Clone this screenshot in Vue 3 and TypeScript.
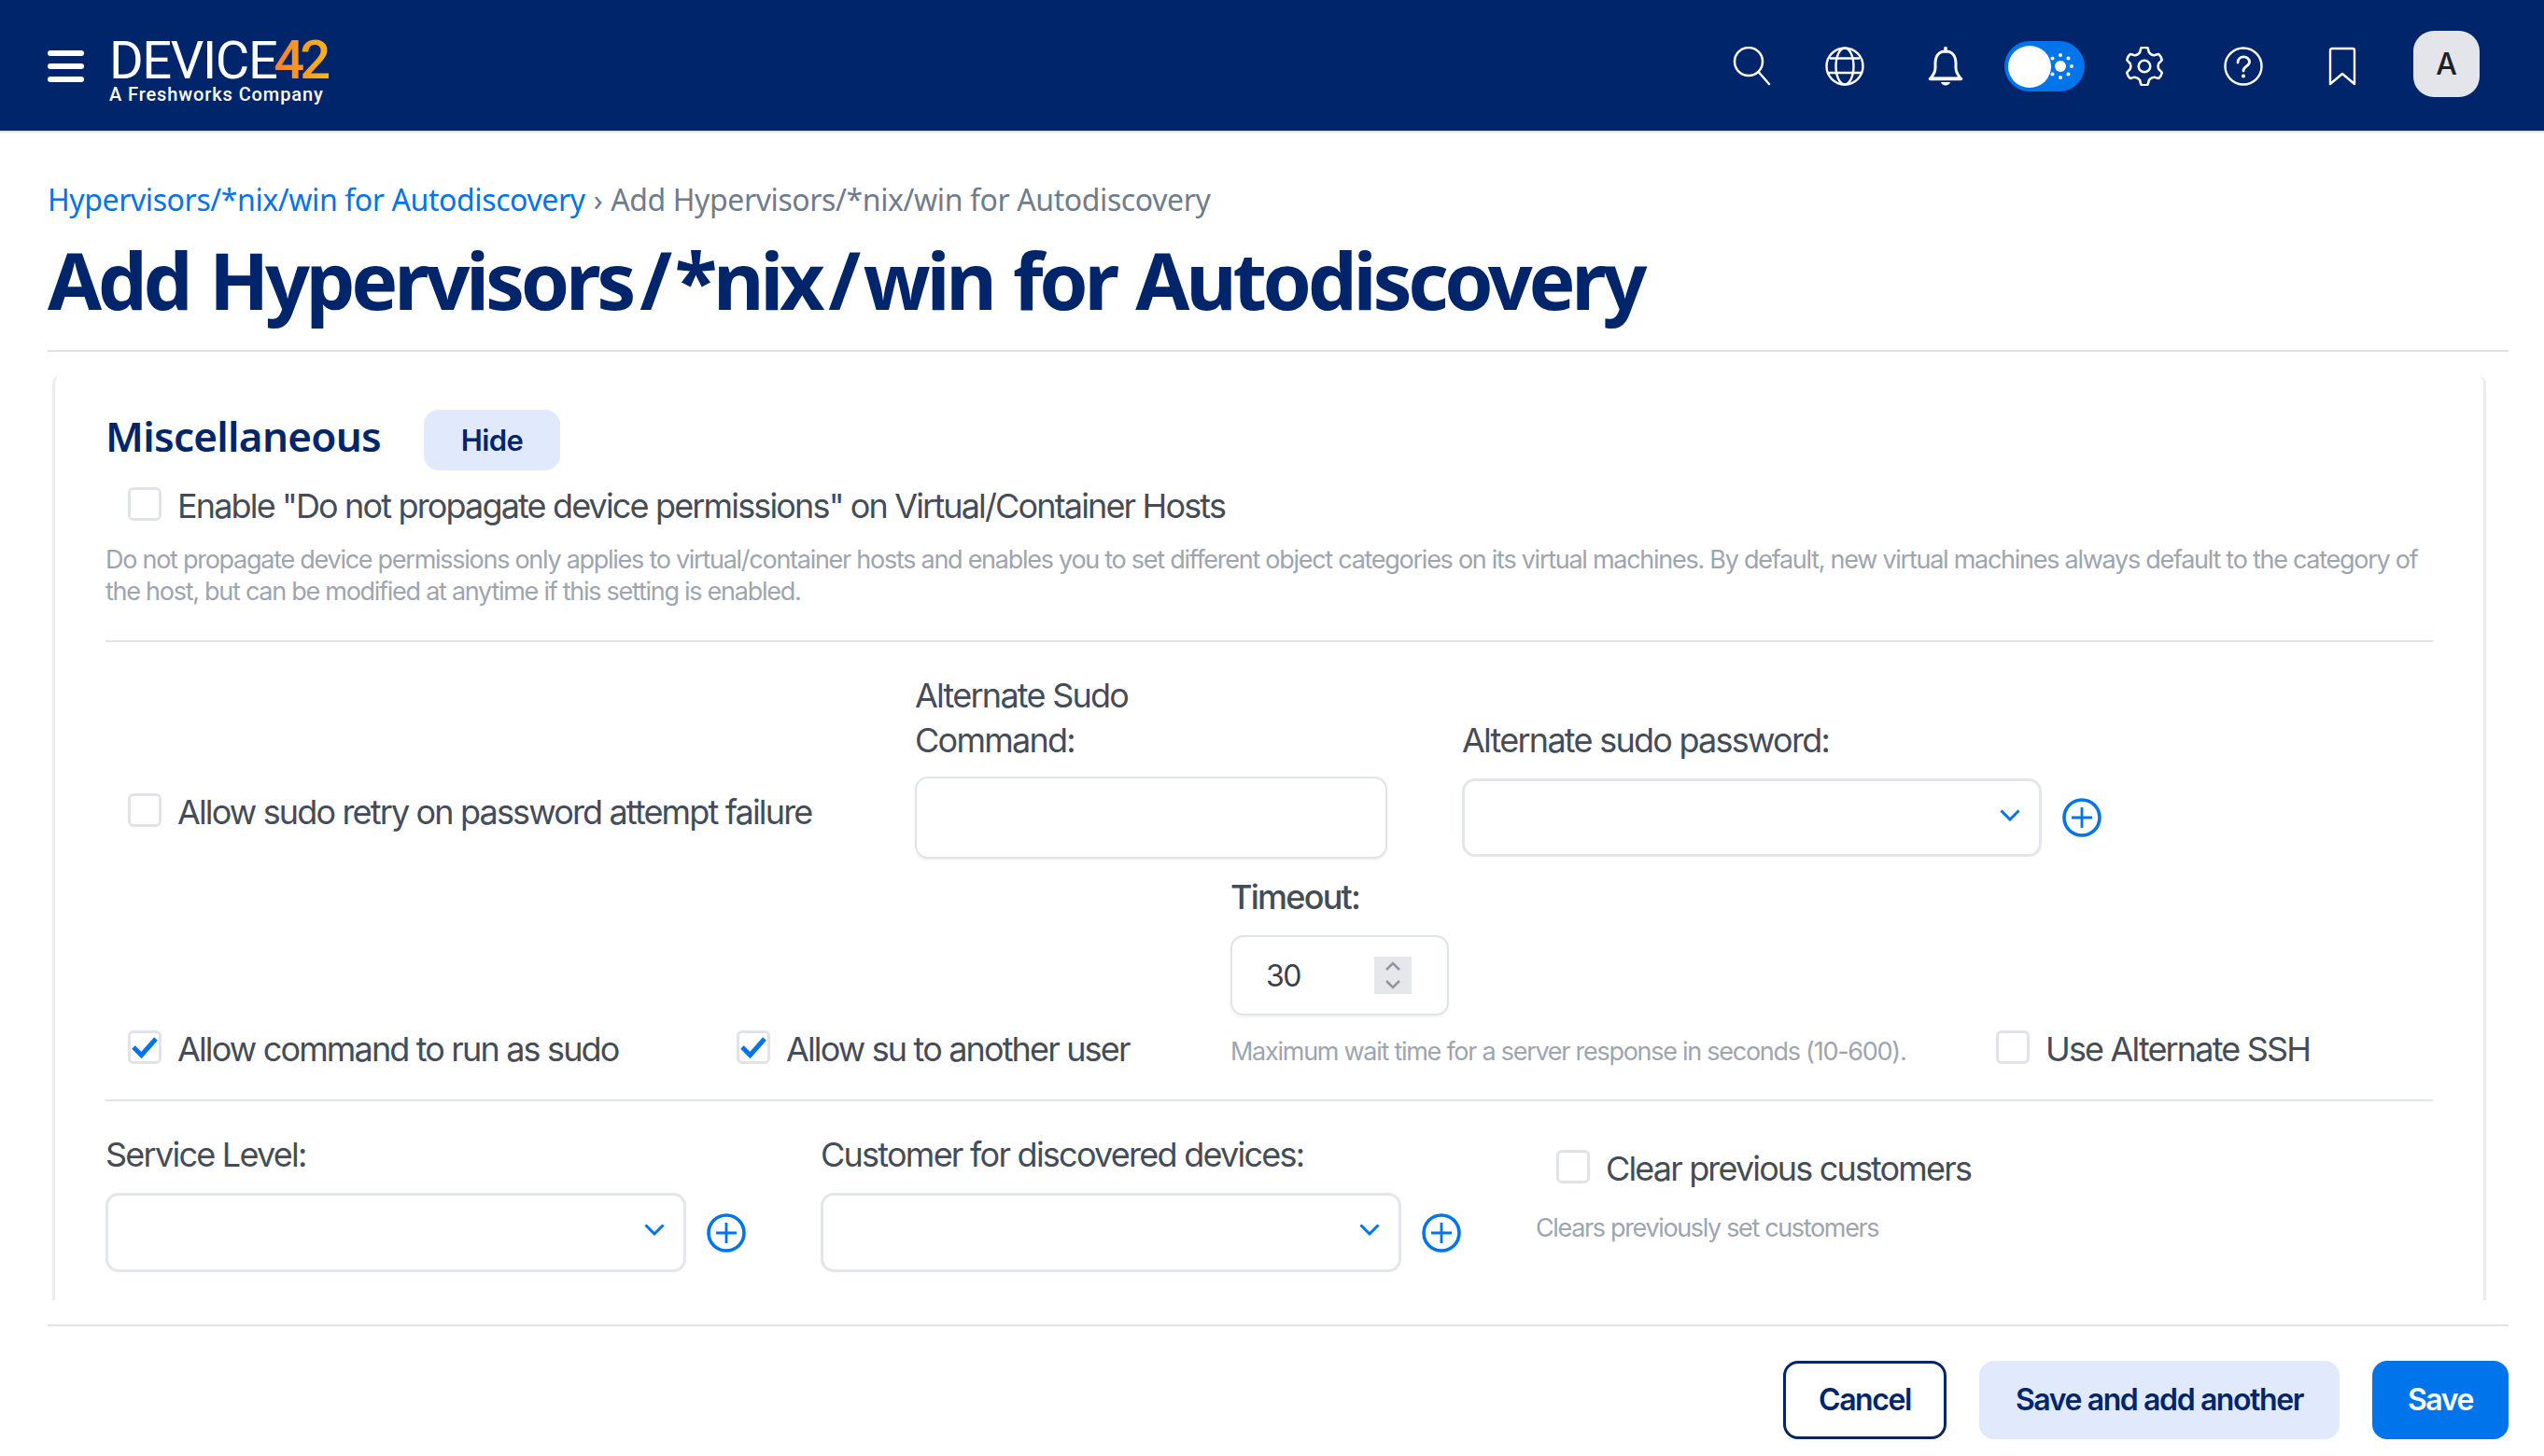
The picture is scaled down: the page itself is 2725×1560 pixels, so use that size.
<script setup lang="ts">
const teeth = 6
const step = (2 * Math.PI) / teeth
const gearPt = (r: number, ang: number) =>
  `${(20 + r * Math.cos(ang)).toFixed(1)} ${(20 + r * Math.sin(ang)).toFixed(1)}`
let gearPath = ''
for (let i = 0; i < teeth; i++) {
  const a = -Math.PI / 2 + i * step
  gearPath += `${i === 0 ? 'M' : 'L'}${gearPt(15, a - step * 0.3)} `
  gearPath += `Q${gearPt(17, a - step * 0.24)} ${gearPt(19, a - step * 0.17)} `
  gearPath += `Q${gearPt(20, a)} ${gearPt(19, a + step * 0.17)} `
  gearPath += `Q${gearPt(17, a + step * 0.24)} ${gearPt(15, a + step * 0.3)} `
  gearPath += `Q${gearPt(13.2, a + step * 0.5)} ${gearPt(15, a + step * 0.7)} `
}
gearPath += 'Z'
const sunDots = Array.from({ length: 8 }, (_, i) => ({
  x: 14 + 12 * Math.cos((i * Math.PI) / 4),
  y: 14 + 12 * Math.sin((i * Math.PI) / 4),
}))
</script>

<template>
  <div class="page">
    <header class="topbar">
      <svg class="burger" viewBox="0 0 39 34" width="39" height="34">
        <rect y="0" width="39" height="6" rx="3" fill="#fff" />
        <rect y="14" width="39" height="6" rx="3" fill="#fff" />
        <rect y="28" width="39" height="6" rx="3" fill="#fff" />
      </svg>
      <div class="logo">
        <div class="logo-mark">DEVICE<span class="logo-num">42</span></div>
        <div class="logo-sub">A Freshworks Company</div>
      </div>
      <nav class="tools">
        <span class="tool tool-search">
          <svg width="42" height="42" viewBox="0 0 42 42" fill="none" stroke="#fff" stroke-width="2.5">
            <circle cx="17" cy="16" r="15" />
            <path d="M28 27.500 L39 40" stroke-linecap="round" />
          </svg>
        </span>
        <span class="tool tool-globe">
          <svg width="42" height="42" viewBox="0 0 42 42" fill="none" stroke="#fff" stroke-width="2.4">
            <circle cx="21" cy="21" r="19.5" />
            <ellipse cx="21" cy="21" rx="9.500" ry="19.5" />
            <path d="M5 12.500 H37 M3 28 H39" />
          </svg>
        </span>
        <span class="tool tool-bell">
          <svg width="38" height="42" viewBox="0 0 38 42" fill="none" stroke="#fff" stroke-width="3">
            <path d="M19 5 C11 5 8 11 8 18 V23 C8 28 5 31 3 34 H35 C33 31 30 28 30 23 V18 C30 11 27 5 19 5Z" stroke-linejoin="round" />
            <path d="M19 1.500 V5" stroke-width="3.500" stroke-linecap="round" />
            <path d="M2.500 34.500 H35.500" stroke-width="3.500" stroke-linecap="round" />
            <path d="M14 38 H24 C23 42.500 15 42.500 14 38Z" fill="#fff" stroke="none" />
          </svg>
        </span>
        <span class="tool tool-toggle">
          <span class="toggle">
            <span class="knob"></span>
            <svg class="sun" width="28" height="28" viewBox="0 0 28 28">
              <circle cx="14" cy="14" r="6" fill="#fff" />
              <circle v-for="(d, i) in sunDots" :key="i" :cx="d.x" :cy="d.y" r="2" fill="#fff" />
            </svg>
          </span>
        </span>
        <span class="tool">
          <svg width="42" height="42" viewBox="0 0 40 40" fill="none" stroke="#fff" stroke-width="2.4" stroke-linejoin="round">
            <path :d="gearPath" />
            <circle cx="20" cy="20" r="6" />
          </svg>
        </span>
        <span class="tool">
          <svg width="42" height="42" viewBox="0 0 42 42" fill="none" stroke="#fff" stroke-width="2.4">
            <circle cx="21" cy="21" r="19.500" />
            <path d="M15 17 C15 9 27.500 9 27.500 16.500 C27.500 21 21 21 21 26" stroke-width="2.800" stroke-linecap="round" />
            <circle cx="21" cy="31.500" r="2" fill="#fff" stroke="none" />
          </svg>
        </span>
        <span class="tool">
          <svg width="32" height="42" viewBox="0 0 32 42" fill="none" stroke="#fff" stroke-width="2.4" stroke-linejoin="round">
            <path d="M3 4 Q3 2 5 2 H27 Q29 2 29 4 V40 L16 29 L3 40 Z" />
          </svg>
        </span>
        <span class="avatar">A</span>
      </nav>
    </header>

    <main class="content">
      <div class="crumbs">
        <a class="crumb-link">Hypervisors/*nix/win for Autodiscovery</a>
        <span class="crumb-sep">›</span>
        <span class="crumb-now">Add Hypervisors/*nix/win for Autodiscovery</span>
      </div>
      <h1 class="title">Add Hypervisors<span class="slash">/</span>*nix<span class="slash">/</span>win for Autodiscovery</h1>

      <section class="panel">
        <div class="panel-head">
          <h2 class="panel-title">Miscellaneous</h2>
          <button class="btn-hide">Hide</button>
        </div>

        <label class="check first-check">
          <span class="box"></span>
          <span class="check-text">Enable "Do not propagate device permissions" on Virtual/Container Hosts</span>
        </label>
        <p class="help help-block">Do not propagate device permissions only applies to virtual/container hosts and enables you to set different object categories on its virtual machines. By default, new virtual machines always default to the category of the host, but can be modified at anytime if this setting is enabled.</p>

        <div class="row-sudo">
          <label class="check sudo-retry">
            <span class="box"></span>
            <span class="check-text">Allow sudo retry on password attempt failure</span>
          </label>
          <div class="field">
            <div class="field-label">Alternate Sudo<br />Command:</div>
            <div class="input"></div>
          </div>
          <div class="field">
            <div class="field-label sudo-pass-label">Alternate sudo password:</div>
            <div class="select-row sudo-row">
              <div class="select sudo-select">
                <svg class="chev" width="22" height="13" viewBox="0 0 22 13" fill="none" stroke="#0074eb" stroke-width="3"><path d="M1.500 1.500 L11 11 L20.500 1.500" /></svg>
              </div>
              <svg class="plus" width="42" height="42" viewBox="0 0 42 42" fill="none" stroke="#0074eb" stroke-width="3.600">
                <circle cx="21" cy="21" r="19" />
                <path d="M21 10 V32 M10 21 H32" stroke-width="2.800" />
              </svg>
            </div>
          </div>
        </div>

        <div class="row-run">
          <label class="check run-check first-run">
            <span class="box box-on">
              <svg width="28" height="24" viewBox="0 0 28 24" fill="none" stroke="#0074eb" stroke-width="5"><path d="M2 12 L10.500 20.500 L26 3" /></svg>
            </span>
            <span class="check-text">Allow command to run as sudo</span>
          </label>
          <label class="check run-check">
            <span class="box box-on">
              <svg width="28" height="24" viewBox="0 0 28 24" fill="none" stroke="#0074eb" stroke-width="5"><path d="M2 12 L10.500 20.500 L26 3" /></svg>
            </span>
            <span class="check-text">Allow su to another user</span>
          </label>
          <div class="field">
            <div class="field-label timeout-label">Timeout:</div>
            <div class="number">
              <span class="number-value">30</span>
              <span class="spin">
                <svg width="18" height="32" viewBox="0 0 18 32" fill="none" stroke="#8f96a0" stroke-width="2.600"><path d="M2 10 L9 3 L16 10 M2 22 L9 29 L16 22" /></svg>
              </span>
            </div>
            <div class="help timeout-help">Maximum wait time for a server response in seconds (10-600).</div>
          </div>
          <label class="check run-check">
            <span class="box"></span>
            <span class="check-text">Use Alternate SSH</span>
          </label>
        </div>

        <div class="row-service">
          <div class="field">
            <div class="field-label service-label">Service Level:</div>
            <div class="select-row">
              <div class="select wide-select">
                <svg class="chev" width="22" height="13" viewBox="0 0 22 13" fill="none" stroke="#0074eb" stroke-width="3"><path d="M1.500 1.500 L11 11 L20.500 1.500" /></svg>
              </div>
              <svg class="plus" width="42" height="42" viewBox="0 0 42 42" fill="none" stroke="#0074eb" stroke-width="3.600">
                <circle cx="21" cy="21" r="19" />
                <path d="M21 10 V32 M10 21 H32" stroke-width="2.800" />
              </svg>
            </div>
          </div>
          <div class="field">
            <div class="field-label service-label">Customer for discovered devices:</div>
            <div class="select-row">
              <div class="select wide-select">
                <svg class="chev" width="22" height="13" viewBox="0 0 22 13" fill="none" stroke="#0074eb" stroke-width="3"><path d="M1.500 1.500 L11 11 L20.500 1.500" /></svg>
              </div>
              <svg class="plus" width="42" height="42" viewBox="0 0 42 42" fill="none" stroke="#0074eb" stroke-width="3.600">
                <circle cx="21" cy="21" r="19" />
                <path d="M21 10 V32 M10 21 H32" stroke-width="2.800" />
              </svg>
            </div>
          </div>
          <div class="clear-col">
            <label class="check clear-check">
              <span class="box"></span>
              <span class="check-text">Clear previous customers</span>
            </label>
            <div class="help clear-help">Clears previously set customers</div>
          </div>
        </div>
      </section>

      <footer class="actions">
        <button class="btn btn-cancel">Cancel</button>
        <button class="btn btn-soft">Save and add another</button>
        <button class="btn btn-save">Save</button>
      </footer>
    </main>
  </div>
</template>

<style>
html, body { margin: 0; background: #fff; }
</style>

<style scoped>
.page {
  width: 2725px;
  height: 1560px;
  overflow: hidden;
  font-family: "Inter", "Noto Sans", sans-serif;
  color: #454c57;
  background: #fff;
}
.topbar {
  height: 140px;
  border-bottom: 2px solid #dfe3e7;
  background: #00256a;
  display: flex;
  align-items: center;
  padding-left: 51px;
  box-sizing: content-box;
}
.burger { margin-right: 27px; margin-top: 2px; }
.logo { width: 240px; color: #fff; margin-top: 11px; }
.logo-mark {
  font-family: "Roboto", sans-serif;
  font-weight: 400;
  font-size: 56px;
  line-height: 46px;
  letter-spacing: -1.4px;
  white-space: nowrap;
  padding-top: 2px;
}
.logo-num {
  font-weight: 500;
  font-size: 58px;
  letter-spacing: -5px;
  margin-left: -3px;
  background: linear-gradient(90deg, #f47f30, #fdb913);
  -webkit-background-clip: text;
  background-clip: text;
  color: transparent;
  padding-right: 6px;
}
.logo-sub {
  font-family: "Roboto", sans-serif;
  font-weight: 500;
  font-size: 20px;
  line-height: 24px;
  letter-spacing: 0.9px;
  margin-top: 1px;
  white-space: nowrap;
}
.tools {
  margin-left: auto;
  display: flex;
  align-items: center;
  padding-right: 69px;
}
.tool {
  width: 106px;
  display: flex;
  justify-content: center;
  align-items: center;
  margin-top: 2px;
}
.tool-search { margin-right: -4px; }
.tool-globe { margin-right: 3px; margin-left: -3px; }
.tool-bell { margin-left: -1px; margin-right: 1px; }
.tool-toggle { margin-left: -1px; margin-right: 1px; }
.toggle {
  width: 86px;
  height: 54px;
  border-radius: 27px;
  background: #0074eb;
  display: flex;
  align-items: center;
  padding: 0 4px;
  box-sizing: border-box;
}
.knob {
  width: 46px;
  height: 45px;
  border-radius: 50%;
  background: #fff;
}
.sun { margin-left: -4px; }
.avatar {
  width: 71px;
  height: 71px;
  border-radius: 22px;
  background: #e3e5ea;
  color: #1d2026;
  font-family: "Inter", sans-serif;
  font-size: 32px;
  font-weight: 500;
  display: flex;
  align-items: center;
  justify-content: center;
  margin-left: 23px;
  margin-top: -3px;
}
.content { padding: 48px 38px 0 51px; }
.crumbs {
  font-family: "Noto Sans", sans-serif;
  font-size: 32px;
  line-height: 48px;
  letter-spacing: -0.4px;
  white-space: nowrap;
  display: flex;
  gap: 9px;
}
.crumb-link { color: #0074eb; }
.crumb-sep { color: #6f7c8a; }
.crumb-now { color: #6f7c8a; }
.title {
  margin: 7px 0 0;
  font-family: "Noto Sans", sans-serif;
  font-weight: 700;
  font-size: 84px;
  line-height: 110px;
  letter-spacing: -4.3px;
  word-spacing: 4px;
  color: #00256a;
  padding-bottom: 20px;
  border-bottom: 2px solid #dfe3e7;
  white-space: nowrap;
}
.slash { margin: 0 7px 0 8px; }
.panel {
  margin: 26px 24px 0 5px;
  height: 990px;
  overflow: hidden;
  border-left: 3px solid #ececec;
  border-right: 3px solid #ececec;
  border-top-left-radius: 8px;
  border-top-right-radius: 8px;
  padding: 36px 54px 0 54px;
  box-sizing: border-box;
}
.panel-head { display: flex; align-items: center; }
.panel-title {
  margin: 0 45px 0 0;
  padding-bottom: 8px;
  font-family: "Noto Sans", sans-serif;
  font-weight: 600;
  font-size: 44px;
  line-height: 57px;
  letter-spacing: -0.7px;
  color: #00256a;
  width: 296px;
  white-space: nowrap;
}
.btn-hide {
  width: 146px;
  height: 65px;
  border: 0;
  border-radius: 16px;
  background: #e0eafc;
  color: #00256a;
  font-family: "Inter", sans-serif;
  font-weight: 600;
  font-size: 31px;
  letter-spacing: -0.6px;
}
.check {
  display: flex;
  align-items: center;
  gap: 17px;
  font-size: 36px;
  letter-spacing: -1.85px;
  line-height: 37px;
  white-space: nowrap;
}
.check-text { position: relative; top: 3px; }
.box {
  width: 36px;
  height: 36px;
  box-sizing: border-box;
  border: 3px solid #e0e3e8;
  border-radius: 6px;
  background: #fff;
  flex: none;
  display: flex;
  align-items: center;
  justify-content: center;
}
.first-check { margin: 17px 0 0 24px; }
.help {
  color: #9ea5af;
  font-size: 27px;
  line-height: 34px;
  letter-spacing: -1.27px;
}
.help-block {
  margin: 25px 0 0;
  padding-bottom: 35px;
  border-bottom: 2px solid #e0e4e8;
}
.row-sudo {
  display: grid;
  grid-template-columns: 867px 586px 1fr;
  align-items: end;
  padding-top: 33px;
}
.sudo-retry { margin: 0 0 34px 24px; }
.field-label {
  font-size: 36px;
  line-height: 48px;
  letter-spacing: -1.75px;
  margin-bottom: 15px;
  white-space: nowrap;
}
.sudo-pass-label { margin-bottom: 17px; }
.service-label { margin-bottom: 17px; }
.input {
  width: 506px;
  height: 88px;
  box-sizing: border-box;
  border: 2px solid #e0e3e8;
  border-radius: 14px;
  box-shadow: 0 2px 3px rgba(0, 0, 0, 0.06);
}
.select-row { display: flex; align-items: center; gap: 22px; }
.sudo-row { margin-bottom: 2px; }
.select {
  height: 84px;
  box-sizing: border-box;
  border: 3px solid #e3e6ea;
  border-radius: 14px;
  display: flex;
  align-items: center;
  justify-content: flex-end;
  padding: 0 20px 6px 0;
}
.sudo-select { width: 621px; }
.wide-select { width: 622px; height: 85px; }
.plus { flex: none; }
.row-run {
  display: grid;
  grid-template-columns: 676px 529px 820px 1fr;
  align-items: end;
  margin-top: 17px;
  padding-bottom: 34px;
  border-bottom: 2px solid #e0e4e8;
}
.run-check { padding-bottom: 4px; }
.first-run { margin-left: 24px; }
.number {
  width: 234px;
  height: 86px;
  box-sizing: border-box;
  border: 2px solid #e0e3e8;
  border-radius: 14px;
  box-shadow: 0 2px 3px rgba(0, 0, 0, 0.06);
  display: flex;
  align-items: center;
  padding: 0 38px 0 36px;
  justify-content: space-between;
  font-size: 32px;
  letter-spacing: -1.5px;
  color: #3b4049;
}
.spin {
  width: 40px;
  height: 40px;
  background: #e6e7eb;
  display: flex;
  align-items: center;
  justify-content: center;
  flex: none;
}
.timeout-label { font-weight: 500; margin-bottom: 17px; }
.timeout-help { margin-top: 22px; white-space: nowrap; }
.row-service {
  display: flex;
  padding-top: 33px;
}
.row-service .field:nth-child(1) { width: 766px; }
.row-service .field:nth-child(2) { width: 766px; }
.clear-col { padding-top: 18px; }
.clear-check { margin-left: 22px; }
.clear-help { margin-top: 31px; white-space: nowrap; letter-spacing: -1.35px; }
.actions {
  border-top: 2px solid #dfe3e7;
  margin-top: 26px;
  padding-top: 37px;
  display: flex;
  justify-content: flex-end;
  gap: 35px;
}
.btn {
  height: 84px;
  border-radius: 16px;
  border: 0;
  padding-bottom: 3px;
  font-family: "Inter", sans-serif;
  font-weight: 600;
  font-size: 32px;
  letter-spacing: -1.4px;
  box-sizing: border-box;
}
.btn-cancel { width: 175px; background: #fff; border: 3px solid #00256a; color: #00256a; }
.btn-soft { width: 386px; background: #e0eafc; color: #00256a; }
.btn-save { width: 146px; background: #0074eb; color: #fff; }
</style>
